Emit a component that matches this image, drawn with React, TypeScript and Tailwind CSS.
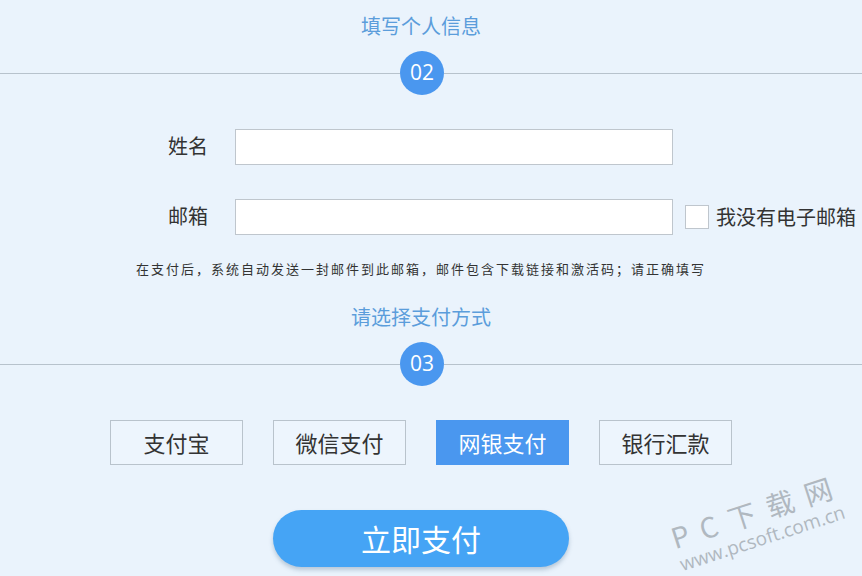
import React, { useState } from "react";

const StepLine = ({ num }: { num: string }) => (
	<div className="flex items-center w-full h-[44px]">
		<div className="w-[400px] h-px bg-[#b7c2cc]" />
		<div className="w-[44px] h-[44px] rounded-full bg-[#4a97ef] flex items-center justify-center text-white text-[21px] font-['Open_Sans','Noto_Sans_CJK_SC',sans-serif]">
			{num}
		</div>
		<div className="flex-1 h-px bg-[#b7c2cc]" />
	</div>
);

const SectionTitle = ({ children }: { children: React.ReactNode }) => (
	<div className="w-[842px] h-[26px] flex items-center justify-center text-[20px] text-[#5b9ddb]">
		{children}
	</div>
);

export default function App() {
	const [method, setMethod] = useState("网银支付");
	const methods = ["支付宝", "微信支付", "网银支付", "银行汇款"];

	return (
		<div className="relative w-[862px] h-[576px] overflow-hidden bg-[#eaf3fc] font-['Noto_Sans_CJK_SC','Noto_Sans',sans-serif] text-[#333]">
			<div className="pt-[13px] mb-[12px]">
				<SectionTitle>填写个人信息</SectionTitle>
			</div>
			<StepLine num="02" />

			<div className="flex flex-col gap-[34px] mt-[34px] pl-[168px]">
				<div className="flex items-center">
					<span className="w-[67px] text-[20px] -mt-[3px]">姓名</span>
					<input className="w-[438px] h-[36px] bg-white border border-[#bfc6cd] outline-none px-2" />
				</div>
				<div className="flex items-center">
					<span className="w-[67px] text-[20px] -mt-[3px]">邮箱</span>
					<input className="w-[438px] h-[36px] bg-white border border-[#bfc6cd] outline-none px-2" />
					<span className="ml-[12px] w-[24px] h-[24px] bg-white border border-[#bfc6cd]" />
					<span className="ml-[7px] text-[20px] whitespace-nowrap">我没有电子邮箱</span>
				</div>
			</div>

			<p className="w-[842px] mt-[26px] mb-[27px] text-center text-[13px] tracking-[2px] leading-4 text-[#333] whitespace-nowrap">
				在支付后，系统自动发送一封邮件到此邮箱，邮件包含下载链接和激活码；请正确填写
			</p>

			<div className="mb-[12px]">
				<SectionTitle>请选择支付方式</SectionTitle>
			</div>
			<StepLine num="03" />

			<div className="w-[842px] flex justify-center gap-[30px] mt-[34px]">
				{methods.map((m) =>
					m === method ? (
						<button
							key={m}
							onClick={() => setMethod(m)}
							className="w-[133px] h-[45px] bg-[#4a97ef] text-white text-[22px] border border-[#4a97ef]"
						>
							{m}
						</button>
					) : (
						<button
							key={m}
							onClick={() => setMethod(m)}
							className="w-[133px] h-[45px] bg-[#edf5fd] text-[#333] text-[22px] border border-[#b9c3cc]"
						>
							{m}
						</button>
					),
				)}
			</div>

			<div className="w-[842px] flex justify-center mt-[45px]">
				<button className="w-[296px] h-[57px] rounded-full bg-[#45a4f5] text-white text-[30px] shadow-[0_3px_4px_rgba(90,120,150,0.35)]">
					立即支付
				</button>
			</div>

			{/* watermark */}
			<div className="absolute left-[684px] top-[520px] -rotate-[18deg] origin-bottom-left pointer-events-none select-none text-[#b0b8c0] whitespace-nowrap">
				<div className="text-[28px] tracking-[12px] leading-8">PC下载网</div>
				<div className="text-[19px] leading-6 font-['Open_Sans',sans-serif]">www.pcsoft.com.cn</div>
			</div>
		</div>
	);
}
